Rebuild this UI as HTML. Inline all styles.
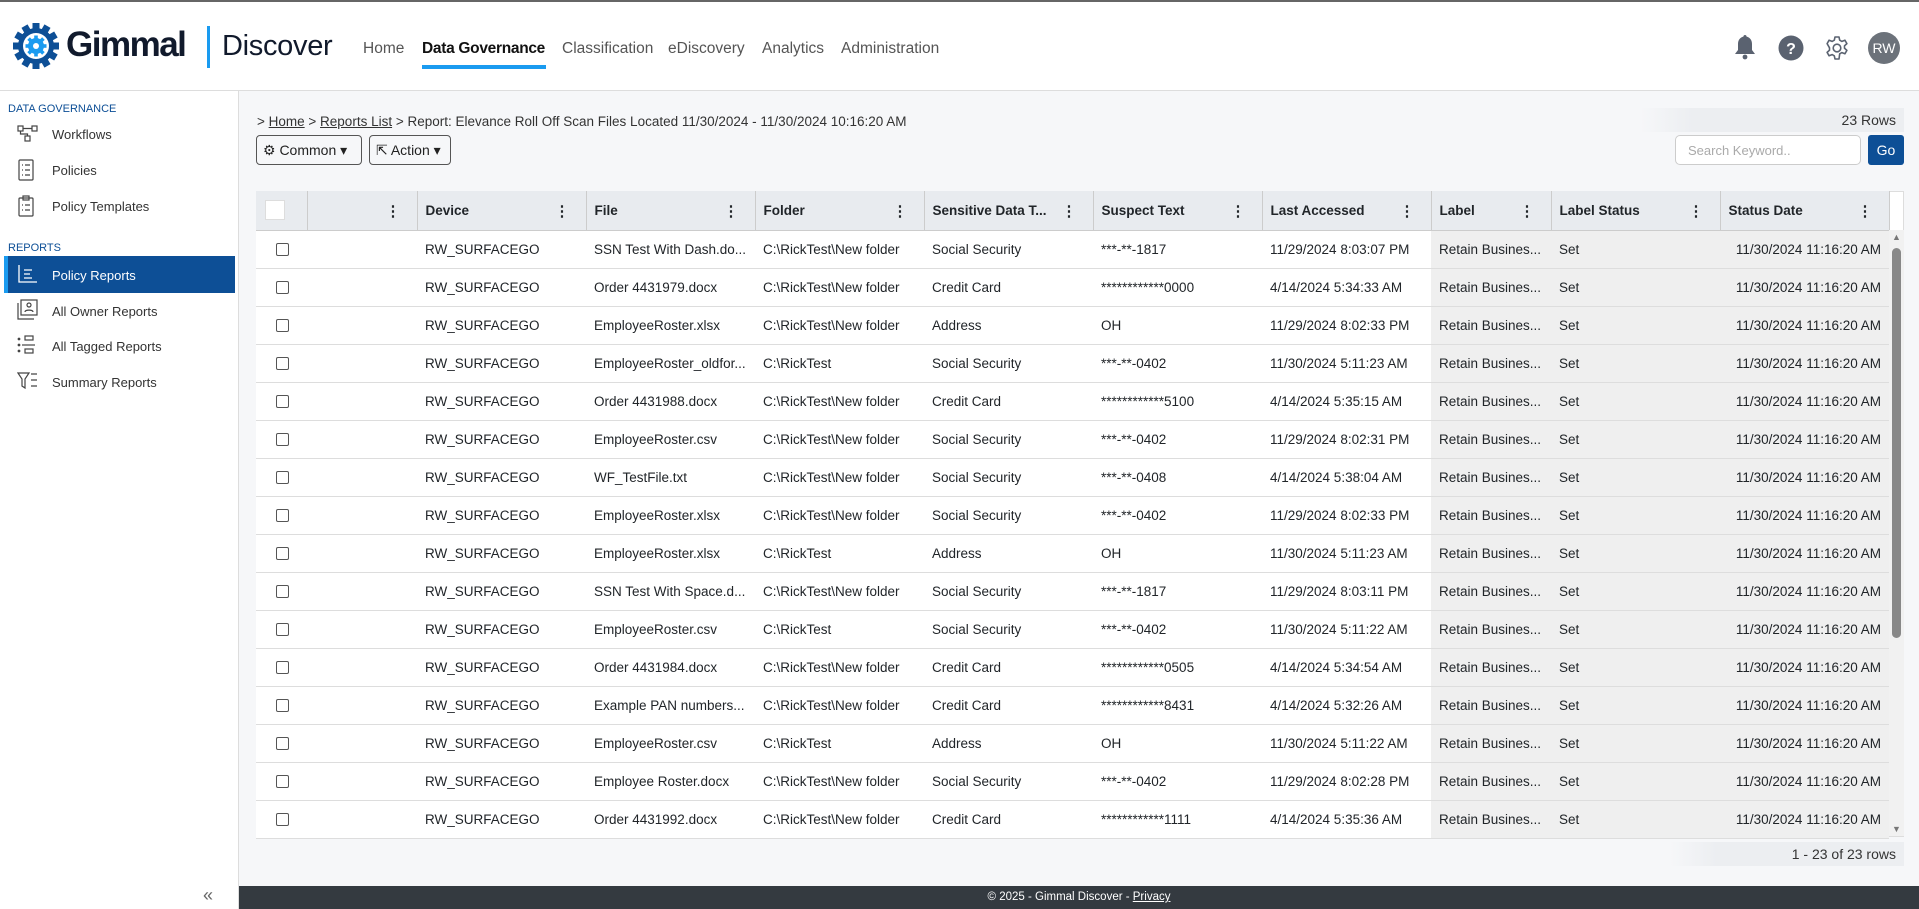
<!DOCTYPE html>
<html><head><meta charset="utf-8">
<style>
*{box-sizing:border-box;margin:0;padding:0}
body{width:1919px;height:909px;overflow:hidden;font-family:"Liberation Sans",sans-serif;color:#212529;background:#f6f7f9;position:relative}
.top{position:absolute;left:0;top:0;width:1919px;height:91px;background:#fff;border-top:2px solid #666;border-bottom:1px solid #ddd}
.logo{position:absolute;left:12px;top:21px}
.gim{position:absolute;left:66px;top:23px;font-size:35px;font-weight:bold;color:#111a2c;letter-spacing:-1.5px}
.vbar{position:absolute;left:207px;top:24px;width:3px;height:42px;background:#1a9bf0}
.disc{position:absolute;left:222px;top:28px;font-size:29px;color:#111a2c;letter-spacing:-0.3px}
.nav{position:absolute;top:38px;font-size:15.5px;color:#555}
.nav.act{color:#111;font-weight:bold;letter-spacing:-0.3px}
.uline{position:absolute;left:422px;top:63px;width:124px;height:4px;background:#1a9bf0}
.side{position:absolute;left:0;top:91px;width:239px;height:818px;background:#fff;border-right:1px solid #ddd}
.sh{position:absolute;left:8px;font-size:11px;color:#0d4f96}
.si{position:absolute;left:52px;font-size:13px;color:#333}
.ic{position:absolute;left:17px}
.act2{position:absolute;left:4px;top:165px;width:231px;height:37px;background:#0d4f96;border-left:4px solid #1a9bf0}
.bc{position:absolute;left:257px;top:114px;font-size:13.5px;color:#333}
.bc u{color:#333}
.btn{position:absolute;top:135px;height:30px;border:1px solid #555;border-radius:4px;background:#f6f7f9;font-size:14px;padding:6px 6px;color:#222}
.rows{position:absolute;left:1640px;top:108px;width:264px;height:24px;background:linear-gradient(90deg,#f6f7f9,#eceef1 20%);text-align:right;padding:4px 8px;font-size:14px;color:#333}
.srch{position:absolute;left:1675px;top:135px;width:186px;height:30px;border:1px solid #ccc;border-radius:5px;background:#fff;font-size:13px;color:#aaa;padding:7px 12px}
.go{position:absolute;left:1868px;top:135px;width:36px;height:30px;background:#0d4f96;border-radius:3px;color:#fff;font-size:14px;text-align:center;line-height:30px}
table{position:absolute;left:256px;top:191px;border-collapse:collapse;table-layout:fixed;width:1633px;font-size:13.5px}
th{background:#e8ebef;height:39px;text-align:left;font-weight:bold;padding-left:8px;border-right:1px solid #ccc;border-bottom:1px solid #ccc;position:relative}
th .k{position:absolute;right:16px;top:11px;font-size:15px;font-weight:bold}
td{height:38px;padding-left:8px;border-bottom:1px solid #ddd;background:#fff;white-space:nowrap;overflow:hidden}
td.g{background:#efefef}
td.r{text-align:right;padding-right:8px}
.cb{display:inline-block;width:13px;height:13px;border:1px solid #555;border-radius:2px;margin-left:12px;vertical-align:middle}
.tbox{position:absolute;left:256px;top:191px;width:1648px;height:646px;border:1px solid #ddd;background:#fff}
.sb{position:absolute;left:1889px;top:230px;width:15px;height:606px;background:#f1f1f1}
.pg{position:absolute;left:1670px;top:842px;width:234px;height:24px;background:linear-gradient(90deg,#f6f7f9,#eceef1 20%);text-align:right;font-size:14px;padding:4px 8px;color:#333}
.foot{position:absolute;left:239px;top:886px;width:1680px;height:23px;background:#343a40;color:#fff;font-size:11.5px;text-align:center;line-height:23px}
</style></head><body>
<div class="top">
<svg class="logo" width="48" height="46" viewBox="0 0 48 46">
<g transform="translate(24,23)">
<g fill="#0d4f96">
<circle r="18"/>
<g id="t"><rect x="-3.5" y="-23" width="7" height="8"/></g>
<use href="#t" transform="rotate(30)"/><use href="#t" transform="rotate(60)"/><use href="#t" transform="rotate(90)"/><use href="#t" transform="rotate(120)"/><use href="#t" transform="rotate(150)"/><use href="#t" transform="rotate(180)"/><use href="#t" transform="rotate(210)"/><use href="#t" transform="rotate(240)"/><use href="#t" transform="rotate(270)"/><use href="#t" transform="rotate(300)"/><use href="#t" transform="rotate(330)"/>
</g>
<circle r="13" fill="#fff"/>
<g fill="#1a9bf0"><circle r="8"/>
<g id="u"><rect x="-1.8" y="-10.5" width="3.6" height="4"/></g>
<use href="#u" transform="rotate(45)"/><use href="#u" transform="rotate(90)"/><use href="#u" transform="rotate(135)"/><use href="#u" transform="rotate(180)"/><use href="#u" transform="rotate(225)"/><use href="#u" transform="rotate(270)"/><use href="#u" transform="rotate(315)"/></g>
<circle r="3" fill="#fff"/>
</g></svg>
<div class="gim">Gimmal</div><div class="vbar"></div><div class="disc">Discover</div>
<div class="nav" style="left:363px">Home</div>
<div class="nav act" style="left:422px">Data Governance</div>
<div class="nav" style="left:562px">Classification</div>
<div class="nav" style="left:668px">eDiscovery</div>
<div class="nav" style="left:762px">Analytics</div>
<div class="nav" style="left:841px">Administration</div>
<div class="uline"></div>
<svg style="position:absolute;left:1734px;top:32px" width="22" height="26" viewBox="0 0 22 26"><path d="M11 1c1 0 1.6.7 1.6 1.6 3.5.8 5.4 3.6 5.4 7.4v6l3 4H1l3-4v-6c0-3.8 1.9-6.6 5.4-7.4C9.4 1.7 10 1 11 1z" fill="#5a6270"/><circle cx="11" cy="23" r="2.4" fill="#5a6270"/></svg>
<svg style="position:absolute;left:1778px;top:33px" width="26" height="26"><circle cx="13" cy="13" r="12.5" fill="#5a6270"/><text x="13" y="19" font-size="16" font-weight="bold" fill="#fff" text-anchor="middle" font-family="Liberation Sans">?</text></svg>
<svg style="position:absolute;left:1824px;top:33px" width="26" height="26" viewBox="0 0 26 26"><path d="M11 2h4l.7 3.2 2.2 1.2 3-1.2 2 3.4-2.4 2.2v2.4l2.4 2.2-2 3.4-3-1.2-2.2 1.2L15 24h-4l-.7-3.2-2.2-1.2-3 1.2-2-3.4 2.4-2.2v-2.4L3.1 8.6l2-3.4 3 1.2 2.2-1.2z" fill="none" stroke="#5a6270" stroke-width="1.6" stroke-linejoin="round"/><circle cx="13" cy="13" r="3.8" fill="none" stroke="#5a6270" stroke-width="1.6"/></svg>
<div style="position:absolute;left:1868px;top:30px;width:32px;height:32px;border-radius:50%;background:#6c727a;color:#fff;font-size:14px;text-align:center;line-height:32px">RW</div>
</div>

<div class="side">
<div class="sh" style="top:12px">DATA GOVERNANCE</div>
<svg class="ic" style="top:33px" width="22" height="20" fill="none" stroke="#444" stroke-width="1.2"><rect x="1" y="2" width="5" height="5"/><rect x="15" y="2" width="5" height="5"/><rect x="8" y="12" width="5" height="5"/><path d="M6 4.5h9M3.5 7v3h7v2"/></svg>
<div class="si" style="top:36px">Workflows</div>
<svg class="ic" style="top:68px" width="18" height="22" fill="none" stroke="#444" stroke-width="1.2"><rect x="2" y="1" width="14" height="20" rx="1"/><path d="M5 6h1M8 6h5M5 11h1M8 11h5M5 16h1M8 16h5"/></svg>
<div class="si" style="top:72px">Policies</div>
<svg class="ic" style="top:104px" width="18" height="22" fill="none" stroke="#444" stroke-width="1.2"><rect x="2" y="3" width="14" height="18" rx="1"/><rect x="6" y="1" width="6" height="4"/><path d="M5 10h1M8 10h5M5 15h1M8 15h5"/></svg>
<div class="si" style="top:108px">Policy Templates</div>
<div class="sh" style="top:151px">REPORTS</div>
<div class="act2"></div>
<svg class="ic" style="top:173px" width="22" height="20" fill="none" stroke="#fff" stroke-width="1.3"><path d="M2 1v17h18M7 6h8M7 10h6M7 14h8"/></svg>
<div class="si" style="top:177px;color:#fff">Policy Reports</div>
<svg class="ic" style="top:208px" width="22" height="22" fill="none" stroke="#444" stroke-width="1.2"><rect x="4" y="1" width="16" height="15"/><path d="M1 4v16h16"/><circle cx="12" cy="6" r="2"/><path d="M8 13c0-2.5 8-2.5 8 0"/></svg>
<div class="si" style="top:213px">All Owner Reports</div>
<svg class="ic" style="top:243px" width="22" height="22" fill="none" stroke="#444" stroke-width="1.2"><circle cx="2" cy="5" r=".8" fill="#444"/><circle cx="2" cy="11" r=".8" fill="#444"/><circle cx="2" cy="17" r=".8" fill="#444"/><rect x="8" y="2" width="8" height="4"/><path d="M5 11h13"/><rect x="8" y="15" width="8" height="4"/></svg>
<div class="si" style="top:248px">All Tagged Reports</div>
<svg class="ic" style="top:280px" width="22" height="20" fill="none" stroke="#444" stroke-width="1.2"><path d="M1 2h11l-4 6v9l-3-2V8z M14 3h6M14 9h6M14 15h6"/></svg>
<div class="si" style="top:284px">Summary Reports</div>
<div style="position:absolute;left:203px;top:794px;font-size:18px;color:#666">«</div>
</div>

<div class="bc">&gt; <u>Home</u> &gt; <u>Reports List</u> &gt; Report: Elevance Roll Off Scan Files Located 11/30/2024 - 11/30/2024 10:16:20 AM</div>
<div class="btn" style="left:256px;width:106px">⚙ Common ▾</div>
<div class="btn" style="left:369px;width:82px">⇱ Action ▾</div>
<div class="rows">23 Rows</div>
<div class="srch">Search Keyword..</div>
<div class="go">Go</div>

<div class="tbox"></div>
<table>
<colgroup><col style="width:51px"><col style="width:110px"><col style="width:169px"><col style="width:169px"><col style="width:169px"><col style="width:169px"><col style="width:169px"><col style="width:169px"><col style="width:120px"><col style="width:169px"><col style="width:169px"></colgroup>
<tr><th><span style="display:inline-block;width:20px;height:20px;background:#fff;border:1px solid #ddd;margin-left:1px;vertical-align:middle"></span></th><th><span class="k">⋮</span></th><th>Device<span class="k">⋮</span></th><th>File<span class="k">⋮</span></th><th>Folder<span class="k">⋮</span></th><th>Sensitive Data T...<span class="k">⋮</span></th><th>Suspect Text<span class="k">⋮</span></th><th>Last Accessed<span class="k">⋮</span></th><th>Label<span class="k">⋮</span></th><th>Label Status<span class="k">⋮</span></th><th>Status Date<span class="k">⋮</span></th></tr>
<tr><td><span class="cb"></span></td><td></td><td>RW_SURFACEGO</td><td>SSN Test With Dash.do...</td><td>C:\RickTest\New folder</td><td>Social Security</td><td>***-**-1817</td><td>11/29/2024 8:03:07 PM</td><td class="g">Retain Busines...</td><td class="g">Set</td><td class="g r">11/30/2024 11:16:20 AM</td></tr>
<tr><td><span class="cb"></span></td><td></td><td>RW_SURFACEGO</td><td>Order 4431979.docx</td><td>C:\RickTest\New folder</td><td>Credit Card</td><td>************0000</td><td>4/14/2024 5:34:33 AM</td><td class="g">Retain Busines...</td><td class="g">Set</td><td class="g r">11/30/2024 11:16:20 AM</td></tr>
<tr><td><span class="cb"></span></td><td></td><td>RW_SURFACEGO</td><td>EmployeeRoster.xlsx</td><td>C:\RickTest\New folder</td><td>Address</td><td>OH</td><td>11/29/2024 8:02:33 PM</td><td class="g">Retain Busines...</td><td class="g">Set</td><td class="g r">11/30/2024 11:16:20 AM</td></tr>
<tr><td><span class="cb"></span></td><td></td><td>RW_SURFACEGO</td><td>EmployeeRoster_oldfor...</td><td>C:\RickTest</td><td>Social Security</td><td>***-**-0402</td><td>11/30/2024 5:11:23 AM</td><td class="g">Retain Busines...</td><td class="g">Set</td><td class="g r">11/30/2024 11:16:20 AM</td></tr>
<tr><td><span class="cb"></span></td><td></td><td>RW_SURFACEGO</td><td>Order 4431988.docx</td><td>C:\RickTest\New folder</td><td>Credit Card</td><td>************5100</td><td>4/14/2024 5:35:15 AM</td><td class="g">Retain Busines...</td><td class="g">Set</td><td class="g r">11/30/2024 11:16:20 AM</td></tr>
<tr><td><span class="cb"></span></td><td></td><td>RW_SURFACEGO</td><td>EmployeeRoster.csv</td><td>C:\RickTest\New folder</td><td>Social Security</td><td>***-**-0402</td><td>11/29/2024 8:02:31 PM</td><td class="g">Retain Busines...</td><td class="g">Set</td><td class="g r">11/30/2024 11:16:20 AM</td></tr>
<tr><td><span class="cb"></span></td><td></td><td>RW_SURFACEGO</td><td>WF_TestFile.txt</td><td>C:\RickTest\New folder</td><td>Social Security</td><td>***-**-0408</td><td>4/14/2024 5:38:04 AM</td><td class="g">Retain Busines...</td><td class="g">Set</td><td class="g r">11/30/2024 11:16:20 AM</td></tr>
<tr><td><span class="cb"></span></td><td></td><td>RW_SURFACEGO</td><td>EmployeeRoster.xlsx</td><td>C:\RickTest\New folder</td><td>Social Security</td><td>***-**-0402</td><td>11/29/2024 8:02:33 PM</td><td class="g">Retain Busines...</td><td class="g">Set</td><td class="g r">11/30/2024 11:16:20 AM</td></tr>
<tr><td><span class="cb"></span></td><td></td><td>RW_SURFACEGO</td><td>EmployeeRoster.xlsx</td><td>C:\RickTest</td><td>Address</td><td>OH</td><td>11/30/2024 5:11:23 AM</td><td class="g">Retain Busines...</td><td class="g">Set</td><td class="g r">11/30/2024 11:16:20 AM</td></tr>
<tr><td><span class="cb"></span></td><td></td><td>RW_SURFACEGO</td><td>SSN Test With Space.d...</td><td>C:\RickTest\New folder</td><td>Social Security</td><td>***-**-1817</td><td>11/29/2024 8:03:11 PM</td><td class="g">Retain Busines...</td><td class="g">Set</td><td class="g r">11/30/2024 11:16:20 AM</td></tr>
<tr><td><span class="cb"></span></td><td></td><td>RW_SURFACEGO</td><td>EmployeeRoster.csv</td><td>C:\RickTest</td><td>Social Security</td><td>***-**-0402</td><td>11/30/2024 5:11:22 AM</td><td class="g">Retain Busines...</td><td class="g">Set</td><td class="g r">11/30/2024 11:16:20 AM</td></tr>
<tr><td><span class="cb"></span></td><td></td><td>RW_SURFACEGO</td><td>Order 4431984.docx</td><td>C:\RickTest\New folder</td><td>Credit Card</td><td>************0505</td><td>4/14/2024 5:34:54 AM</td><td class="g">Retain Busines...</td><td class="g">Set</td><td class="g r">11/30/2024 11:16:20 AM</td></tr>
<tr><td><span class="cb"></span></td><td></td><td>RW_SURFACEGO</td><td>Example PAN numbers...</td><td>C:\RickTest\New folder</td><td>Credit Card</td><td>************8431</td><td>4/14/2024 5:32:26 AM</td><td class="g">Retain Busines...</td><td class="g">Set</td><td class="g r">11/30/2024 11:16:20 AM</td></tr>
<tr><td><span class="cb"></span></td><td></td><td>RW_SURFACEGO</td><td>EmployeeRoster.csv</td><td>C:\RickTest</td><td>Address</td><td>OH</td><td>11/30/2024 5:11:22 AM</td><td class="g">Retain Busines...</td><td class="g">Set</td><td class="g r">11/30/2024 11:16:20 AM</td></tr>
<tr><td><span class="cb"></span></td><td></td><td>RW_SURFACEGO</td><td>Employee Roster.docx</td><td>C:\RickTest\New folder</td><td>Social Security</td><td>***-**-0402</td><td>11/29/2024 8:02:28 PM</td><td class="g">Retain Busines...</td><td class="g">Set</td><td class="g r">11/30/2024 11:16:20 AM</td></tr>
<tr><td><span class="cb"></span></td><td></td><td>RW_SURFACEGO</td><td>Order 4431992.docx</td><td>C:\RickTest\New folder</td><td>Credit Card</td><td>************1111</td><td>4/14/2024 5:35:36 AM</td><td class="g">Retain Busines...</td><td class="g">Set</td><td class="g r">11/30/2024 11:16:20 AM</td></tr>
</table>
<div class="sb"><div style="position:absolute;left:3px;top:18px;width:9px;height:390px;background:#888;border-radius:5px"></div><div style="position:absolute;left:3px;top:2px;font-size:9px;color:#777">▲</div><div style="position:absolute;left:3px;bottom:2px;font-size:9px;color:#777">▼</div></div>
<div class="pg">1 - 23 of 23 rows</div>
<div class="foot">© 2025 - Gimmal Discover - <u>Privacy</u></div>
</body></html>
